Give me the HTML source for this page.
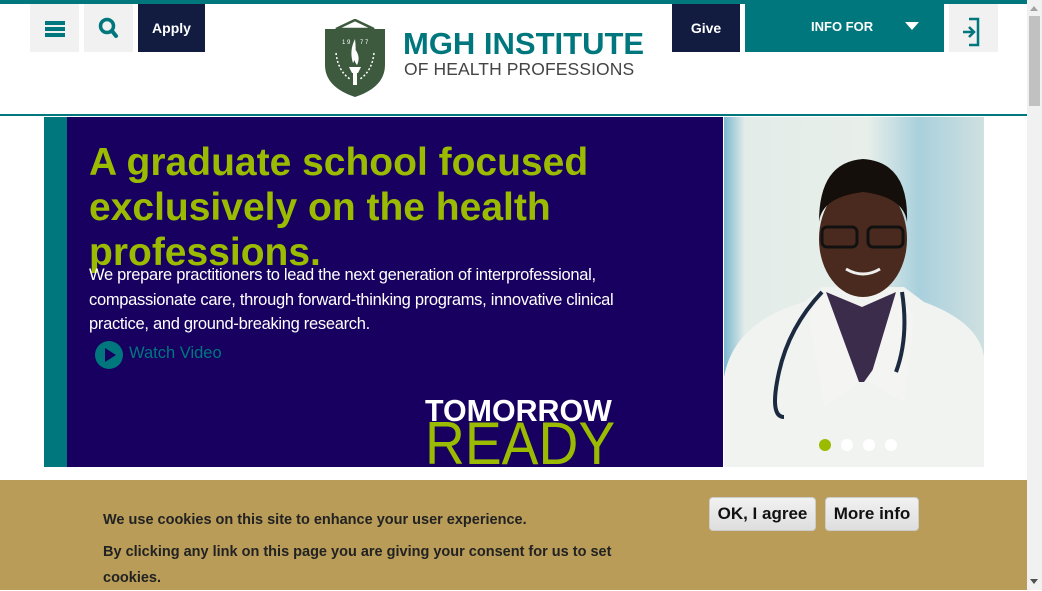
<!DOCTYPE html>
<html><head><meta charset="utf-8"><style>
*{margin:0;padding:0;box-sizing:border-box}
body{width:1042px;height:590px;overflow:hidden;background:#fff;font-family:"Liberation Sans",sans-serif;position:relative}
.abs{position:absolute}
.topbar{left:0;top:0;width:1027px;height:4px;background:#00777d}
.gbtn{background:#f1f1f1;top:4px;height:48px}
.sb{left:1027px;top:0;width:15px;height:590px;background:#f1f1f1}
.thumb{left:1029px;top:16px;width:11px;height:90px;background:#c1c1c1}
.h1{left:89px;top:140px;color:#9bbb00;font-size:39px;font-weight:bold;line-height:45px;letter-spacing:0px;width:620px}
.p{left:89px;top:263px;color:#fff;font-size:16.5px;line-height:24.5px;letter-spacing:-0.3px;width:540px}
.cbtn{top:497px;height:34px;background:linear-gradient(#f1f1f1,#dedede);border:1px solid #ccc;border-radius:4px;font-weight:bold;font-size:17px;color:#111;text-align:center;line-height:32px}
.ct{left:103px;color:#222;font-weight:bold;font-size:14.5px}
</style></head><body>
<div class="abs topbar"></div>
<div class="abs gbtn" style="left:30px;width:49px"><svg width="49" height="48"><rect x="15" y="17" width="20" height="4" fill="#00777d"/><rect x="15" y="23" width="20" height="4" fill="#00777d"/><rect x="15" y="29" width="20" height="4" fill="#00777d"/></svg></div>
<div class="abs gbtn" style="left:84px;width:49px"><svg width="49" height="48"><circle cx="23" cy="22" r="6.5" fill="none" stroke="#00777d" stroke-width="3.5"/><line x1="28" y1="27" x2="32" y2="32" stroke="#00777d" stroke-width="4" stroke-linecap="round"/></svg></div>
<div class="abs" style="left:138px;top:4px;width:67px;height:48px;background:#121c40;color:#fff;font-size:14px;font-weight:bold;text-align:center;line-height:48px">Apply</div>
<div class="abs" style="left:672px;top:4px;width:68px;height:48px;background:#121c40;color:#fff;font-size:14px;font-weight:bold;text-align:center;line-height:48px">Give</div>
<div class="abs" style="left:745px;top:4px;width:199px;height:48px;background:#00777d;color:#fff;font-size:13px;font-weight:bold;line-height:46px;padding-left:66px">INFO FOR</div>
<div class="abs" style="left:905px;top:22px;width:0;height:0;border-left:7px solid transparent;border-right:7px solid transparent;border-top:8px solid #fff"></div>
<div class="abs gbtn" style="left:949px;width:49px"><svg width="49" height="48"><path d="M20 15h9v26h-9" fill="none" stroke="#00777d" stroke-width="2.5"/><path d="M14 28h10M20 23l5 5-5 5" fill="none" stroke="#00777d" stroke-width="2.5"/></svg></div>
<svg class="abs" style="left:324px;top:19px" width="62" height="79"><path d="M12 10 L31 1 L50 10 Z" fill="none" stroke="#3d5a3f" stroke-width="2.5"/><path d="M1 10 H61 V46 Q61 68 31 78 Q1 68 1 46 Z" fill="#3d5a3f"/><text x="18" y="25" font-size="6" fill="#fff">1 9</text><text x="36" y="25" font-size="6" fill="#fff">7 7</text><path d="M31 20 Q25 32 29 44 Q33 38 31 20Z" fill="#fff"/><path d="M31 30 Q37 38 33 46 Q28 40 31 30Z" fill="#fff"/><path d="M25 48 H37 L34 54 H28 Z M29 54 H33 V66 H29Z" fill="#fff"/><path d="M12 34 Q14 52 26 60 M50 34 Q48 52 36 60" fill="none" stroke="#fff" stroke-width="1.5" stroke-dasharray="2 2"/></svg>
<div class="abs" style="left:403px;top:26px;color:#00777d;font-weight:bold;font-size:31px;letter-spacing:0px">MGH INSTITUTE</div>
<div class="abs" style="left:404px;top:59px;color:#444;font-size:17.5px;letter-spacing:0.1px">OF HEALTH PROFESSIONS</div>
<div class="abs" style="left:0;top:114px;width:1027px;height:2px;background:#00777d"></div>
<div class="abs" style="left:44px;top:117px;width:23px;height:350px;background:#00777d"></div>
<div class="abs" style="left:67px;top:117px;width:656px;height:350px;background:#170060;overflow:hidden">
<div class="abs" style="left:358px;top:276px;color:#fff;font-size:31px;font-weight:bold;transform:scaleX(0.98);transform-origin:left">TOMORROW</div>
<div class="abs" style="left:358px;top:292px;color:#9bbb00;font-size:60px;transform:scaleX(0.92);transform-origin:left">READY</div>
</div>
<div class="abs h1">A graduate school focused exclusively on the health professions.</div>
<div class="abs p">We prepare practitioners to lead the next generation of interprofessional, compassionate care, through forward-thinking programs, innovative clinical practice, and ground-breaking research.</div>
<svg class="abs" style="left:95px;top:341px" width="28" height="28"><circle cx="14" cy="14" r="14" fill="#00777d"/><path d="M10 7 L21 14 L10 21Z" fill="#170060"/></svg>
<div class="abs" style="left:129px;top:344px;color:#00777d;font-size:16.5px">Watch Video</div>
<svg class="abs" style="left:724px;top:117px" width="260" height="350">
<defs><linearGradient id="bg" x1="0" x2="1"><stop offset="0" stop-color="#7ab7cf"/><stop offset="0.08" stop-color="#e3ece9"/><stop offset="0.55" stop-color="#e8efea"/><stop offset="0.75" stop-color="#a9d0dd"/><stop offset="1" stop-color="#cfe0e0"/></linearGradient></defs>
<rect width="260" height="350" fill="url(#bg)"/>
<path d="M0 350 L0 260 Q10 205 80 185 L98 170 L180 170 L200 185 Q255 205 260 240 L260 350Z" fill="#f1f3f1"/>
<path d="M102 175 L138 190 L172 175 L165 230 L140 265 L112 265 Z" fill="#3b2c4c"/>
<path d="M102 175 L135 265 L100 290 L85 200Z M172 175 L145 265 L180 285 L190 200Z" fill="#f4f5f3"/>
<path d="M98 175 Q65 210 55 255 Q45 300 60 300 M178 175 Q185 220 172 255" fill="none" stroke="#1c2a40" stroke-width="4"/>
<ellipse cx="139" cy="122" rx="44" ry="58" fill="#4a2a1e"/>
<path d="M95 105 Q95 45 139 42 Q185 45 183 105 Q180 80 139 75 Q98 80 95 105Z" fill="#150f0c"/>
<rect x="98" y="110" width="35" height="20" rx="5" fill="none" stroke="#111" stroke-width="3"/><rect x="144" y="110" width="35" height="20" rx="5" fill="none" stroke="#111" stroke-width="3"/>
<path d="M122 152 Q139 162 156 152" fill="none" stroke="#eee" stroke-width="3"/>
<circle cx="101" cy="328" r="6" fill="#9bbb00"/><circle cx="123" cy="328" r="6" fill="#fff"/><circle cx="145" cy="328" r="6" fill="#fff"/><circle cx="167" cy="328" r="6" fill="#fff"/>
</svg>
<div class="abs" style="left:0;top:480px;width:1027px;height:110px;background:#b89c58"></div>
<div class="abs ct" style="top:512px">We use cookies on this site to enhance your user experience.</div>
<div class="abs ct" style="top:539px;width:520px;line-height:26px">By clicking any link on this page you are giving your consent for us to set cookies.</div>
<div class="abs cbtn" style="left:709px;width:107px">OK, I agree</div>
<div class="abs cbtn" style="left:825px;width:94px">More info</div>
<div class="abs sb"></div><div class="abs thumb"></div>
<div class="abs" style="left:1030px;top:6px;border-left:4px solid transparent;border-right:4px solid transparent;border-bottom:5px solid #a3a3a3"></div>
<div class="abs" style="left:1030px;top:579px;border-left:4px solid transparent;border-right:4px solid transparent;border-top:5px solid #505050"></div>
</body></html>
